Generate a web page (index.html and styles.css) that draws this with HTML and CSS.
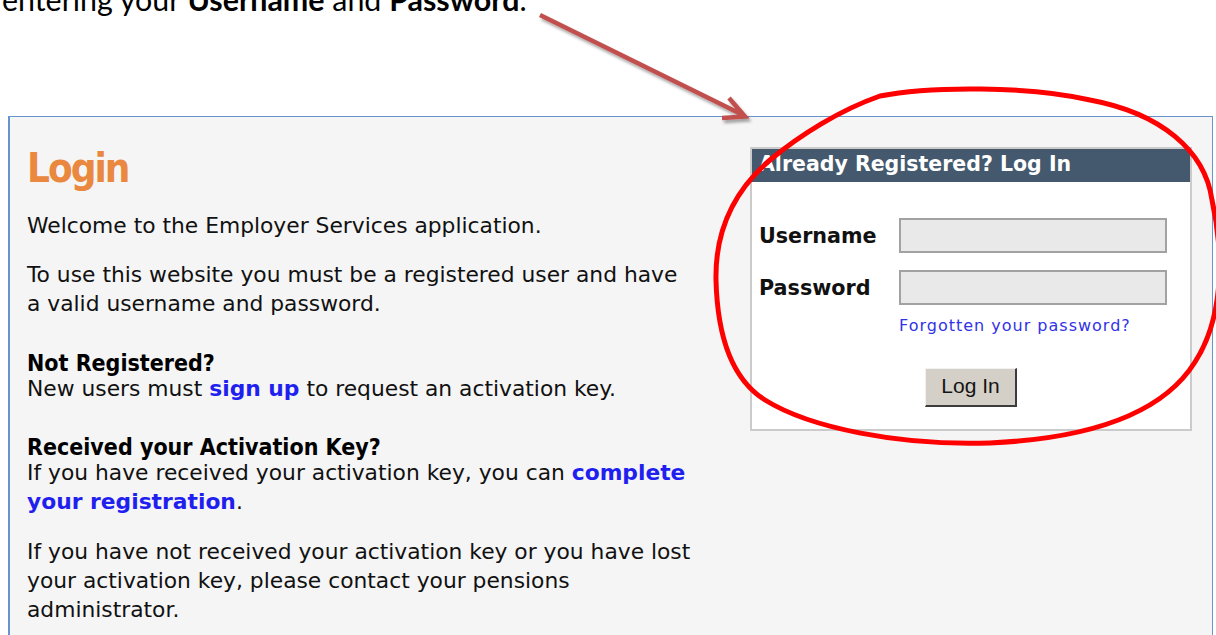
FILE: index.html
```html
<!DOCTYPE html>
<html lang="en">
<head>
<meta charset="utf-8">
<title>Employer Services – Login</title>
<link rel="stylesheet" href="styles.css">
</head>
<body>
<div class="page">
  <p class="caption">entering your <b>Username</b> and <b>Password</b>.</p>

  <div class="panel">
    <div class="intro">
      <h1 class="title">Login</h1>
      <p class="para">Welcome to the Employer Services application.</p>
      <p class="para">To use this website you must be a registered user and have<br>a valid username and password.</p>

      <div class="section">
        <h2 class="section-head">Not Registered?</h2>
        <p class="section-text">New users must <a class="link" href="#">sign up</a> to request an activation key.</p>
      </div>

      <div class="section">
        <h2 class="section-head">Received your Activation Key?</h2>
        <p class="section-text">If you have received your activation key, you can <a class="link" href="#">complete<br>your registration</a>.</p>
      </div>

      <p class="para">If you have not received your activation key or you have lost<br>your activation key, please contact your pensions<br>administrator.</p>
    </div>

    <form class="login-box">
      <div class="login-head">Already Registered? Log In</div>
      <div class="login-body">
        <div class="login-grid">
          <label class="field-label" for="username">Username</label>
          <input class="field-input" id="username" type="text">
          <label class="field-label" for="password">Password</label>
          <input class="field-input" id="password" type="password">
          <a class="forgot" href="#">Forgotten your password?</a>
        </div>
        <div class="login-actions">
          <button class="login-btn" type="button">Log In</button>
        </div>
      </div>
    </form>
  </div>

  <svg class="markup" width="1216" height="635" viewBox="0 0 1216 635" aria-hidden="true">
    <defs>
      <filter id="soft-shadow" x="-10%" y="-10%" width="130%" height="140%">
        <feDropShadow dx="2" dy="3" stdDeviation="1.8" flood-color="#000" flood-opacity="0.35"/>
      </filter>
    </defs>
    <g class="pointer" filter="url(#soft-shadow)">
      <path d="M540 15 L743 115 M729 98 L745 116.5 L722 118"/>
    </g>
    <path class="ring" d="M880 96
      C930 86 1030 86 1090 100
      C1160 113 1205 150 1212 200
      C1225 260 1222 320 1195 362
      C1165 410 1100 438 990 443
      C900 446 810 428 765 400
      C725 375 717 320 716 280
      C715 230 735 190 770 160
      C800 135 840 110 880 96 Z"/>
  </svg>
</div>
</body>
</html>
```

FILE: styles.css
```css
html, body {
  margin: 0;
  padding: 0;
  background: #ffffff;
}

.page {
  position: relative;
  display: flow-root;
  width: 1216px;
  height: 635px;
  overflow: hidden;
  background: #ffffff;
}

/* Document sentence above the screen capture */
.caption {
  margin: -18px 0 0 2px;
  font-family: Lato, "Liberation Sans", sans-serif;
  font-size: 30.4px;
  line-height: 34px;
  color: #000;
}
.caption b {
  font-weight: 700;
}

/* Captured application window */
.panel {
  margin: 100px 0 0 8px;
  width: 1205px;
  min-height: 560px;
  box-sizing: border-box;
  border: 1px solid #6794cc;
  border-left-width: 2px;
  background: #f5f5f5;
  padding: 27px 20px 0 17px;
  display: flex;
  justify-content: space-between;
  align-items: flex-start;
  font-family: "DejaVu Sans", Verdana, sans-serif;
  color: #111;
}

.intro {
  width: 700px;
}

.title {
  margin: 0 0 19px;
  font-family: "DejaVu Sans Condensed", "DejaVu Sans", sans-serif;
  font-stretch: condensed;
  font-weight: 700;
  font-size: 40px;
  line-height: 48px;
  letter-spacing: -2px;
  color: #e9883e;
}

.para {
  margin: 0 0 20px;
  font-size: 21.8px;
  line-height: 29px;
}

.section {
  margin-top: 35px;
}
.section + .section {
  margin-top: 34px;
}
.section + .para {
  margin-top: 21px;
}

.section-head {
  margin: 0;
  font-family: "DejaVu Sans Condensed", "DejaVu Sans", sans-serif;
  font-stretch: condensed;
  font-weight: 700;
  font-size: 23px;
  line-height: 21px;
  color: #000;
}

.section-text {
  margin: 0;
  font-size: 21.8px;
  line-height: 29px;
}

.link {
  color: #1f1ff0;
  font-weight: 700;
  text-decoration: none;
}

/* Log-in box */
.login-box {
  margin: 3px 0 0;
  width: 442px;
  box-sizing: border-box;
  border: 2px solid #cbcbcb;
  background: #ffffff;
}

.login-head {
  background: #44596e;
  color: #ffffff;
  font-weight: 700;
  font-size: 20.5px;
  line-height: 31px;
  padding: 0 0 2px 7px;
}

.login-body {
  padding: 36px 0 22px;
}

.login-grid {
  margin-left: 7px;
  display: grid;
  grid-template-columns: 140px 268px;
  row-gap: 17px;
  align-items: center;
}

.field-label {
  font-weight: 700;
  font-size: 20.7px;
  line-height: 24px;
  color: #111;
}

.field-input {
  width: 268px;
  height: 35px;
  box-sizing: border-box;
  margin: 0;
  border: 2px solid #a2a2a2;
  background: #e9e9e9;
  padding: 0 4px;
  font: inherit;
}

.forgot {
  grid-column: 2;
  margin-top: -6px;
  font-size: 16px;
  line-height: 20px;
  letter-spacing: 1px;
  color: #3232e6;
  text-decoration: none;
}

.login-actions {
  display: flex;
  justify-content: center;
  margin-top: 32px;
}

.login-btn {
  width: 92px;
  height: 39px;
  box-sizing: border-box;
  margin: 0;
  padding: 0 0 2px;
  background: #d4d0c8;
  border-style: solid;
  border-width: 1px 2px 2px 1px;
  border-color: #f2f2f2 #3c3c3c #3c3c3c #f2f2f2;
  font-family: "Liberation Sans", Arial, sans-serif;
  font-size: 21px;
  color: #141414;
}

/* Hand-drawn markup layered over the capture */
.markup {
  position: absolute;
  top: 0;
  left: 0;
  pointer-events: none;
  overflow: visible;
}

.pointer path {
  fill: none;
  stroke: #c0504d;
  stroke-width: 4.5;
  stroke-linejoin: miter;
}

.ring {
  fill: none;
  stroke: #ff0000;
  stroke-width: 5;
  stroke-linecap: round;
  stroke-linejoin: round;
}
```
